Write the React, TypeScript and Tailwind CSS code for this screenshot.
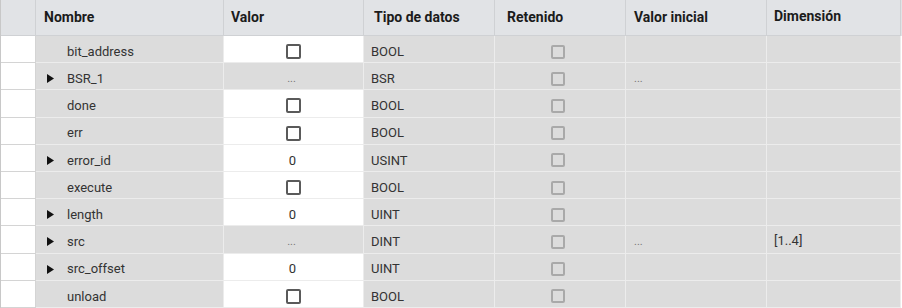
import React from "react";

type Row = {
  name: string;
  expand?: boolean;
  value: "check" | "dots" | "zero";
  type: string;
  initial?: string;
  dim?: string;
};

const rows: Row[] = [
  { name: "bit_address", value: "check", type: "BOOL" },
  { name: "BSR_1", expand: true, value: "dots", type: "BSR", initial: "..." },
  { name: "done", value: "check", type: "BOOL" },
  { name: "err", value: "check", type: "BOOL" },
  { name: "error_id", expand: true, value: "zero", type: "USINT" },
  { name: "execute", value: "check", type: "BOOL" },
  { name: "length", expand: true, value: "zero", type: "UINT" },
  { name: "src", expand: true, value: "dots", type: "DINT", initial: "...", dim: "[1..4]" },
  { name: "src_offset", expand: true, value: "zero", type: "UINT" },
  { name: "unload", value: "check", type: "BOOL" },
];

const grid = "grid grid-cols-[35px_188px_140px_131px_131px_141px_134px]";
const head = "flex items-center h-[36px] border-r border-b border-[#cfd1d4] text-[14px] font-bold text-[#1b1b1b]";
const cell = "flex items-center h-[27.2px] pt-[5px] border-r border-b border-[#ececec] bg-[#dcdcdc] text-[13px] text-[#333]";

const Arrow = () => (
  <svg width="7" height="9" viewBox="0 0 7 9" className="mr-[13px]">
    <polygon points="0,0 7,4.5 0,9" fill="#111" />
  </svg>
);

const Check = ({ disabled }: { disabled?: boolean }) =>
  disabled ? (
    <span className="w-[14px] h-[14px] rounded-[2px] border-2 border-[#a9a9a9]" />
  ) : (
    <span className="w-[15px] h-[15px] rounded-[2px] border-2 border-[#5a5a5a] bg-white" />
  );

export default function App() {
  return (
    <div className="w-[902px] h-[308px] overflow-hidden bg-white font-['Roboto',sans-serif] border-l border-[#c8c8c8]">
      <div className={`${grid} bg-[#e1e3e6]`}>
        <div className={head} />
        <div className={`${head} pl-[8px]`}>Nombre</div>
        <div className={`${head} pl-[7px]`}>Valor</div>
        <div className={`${head} pl-[10px]`}>Tipo de datos</div>
        <div className={`${head} pl-[12px]`}>Retenido</div>
        <div className={`${head} pl-[8px]`}>Valor inicial</div>
        <div className={`${head} pl-[7px] pb-[3px]`}>Dimensión</div>
      </div>
      {rows.map((r) => (
        <div key={r.name} className={grid}>
          <div className="h-[27.2px] bg-white border-r border-b border-[#d4d4d4]" />
          <div className={`${cell} pl-[11px]`}>
            {r.expand ? <Arrow /> : <span className="w-[20px]" />}
            {r.name}
          </div>
          <div
            className={`${cell} justify-center ${
              r.value === "dots" ? "" : "bg-white"
            }`}
          >
            {r.value === "check" && <Check />}
            {r.value === "zero" && <span className="pr-[2px]">0</span>}
            {r.value === "dots" && <span className="text-[#777] text-[11px] pr-[4px]">...</span>}
          </div>
          <div className={`${cell} pl-[7px]`}>{r.type}</div>
          <div className={`${cell} justify-center pr-[4px]`}>
            <Check disabled />
          </div>
          <div className={`${cell} pl-[8px]`}>
            {r.initial && <span className="text-[#777] text-[11px]">{r.initial}</span>}
          </div>
          <div className="flex items-start h-[27.2px] pt-[5px] pl-[7px] border-r border-b border-[#ececec] bg-[#dcdcdc] text-[13px] text-[#333]">
            {r.dim}
          </div>
        </div>
      ))}
    </div>
  );
}
